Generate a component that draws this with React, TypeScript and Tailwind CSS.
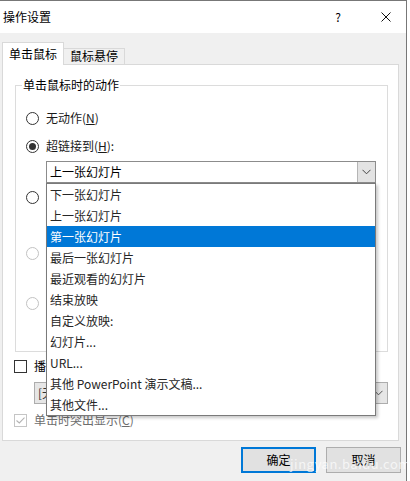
import React from 'react';

const font = { fontFamily: '"Noto Sans CJK SC", "Noto Sans", sans-serif' };

const listItems = [
    '下一张幻灯片',
    '上一张幻灯片',
    '第一张幻灯片',
    '最后一张幻灯片',
    '最近观看的幻灯片',
    '结束放映',
    '自定义放映:',
    '幻灯片...',
    'URL...',
    '其他 PowerPoint 演示文稿...',
    '其他文件...',
];

function Radio({ checked = false, disabled = false }: { checked?: boolean; disabled?: boolean }) {
    return (
        <span
            className={
                'w-[13px] h-[13px] rounded-full border flex items-center justify-center shrink-0 bg-white ' +
                (disabled ? 'border-[#c2c2c2]' : 'border-[#333333]')
            }
        >
            {checked && <span className="w-[7px] h-[7px] rounded-full bg-[#333333]" />}
        </span>
    );
}

function Chevron({ color = '#444' }: { color?: string }) {
    return (
        <svg width="9" height="6" viewBox="0 0 9 6">
            <path d="M0.5 0.8 L4.5 4.8 L8.5 0.8" fill="none" stroke={color} strokeWidth="1" />
        </svg>
    );
}

export default function App() {
    return (
        <div className="w-[410px] h-[481px] bg-white overflow-hidden text-[12px] text-[#1a1a1a]" style={font}>
            <div className="relative w-[407px] h-[481px] bg-[#f0f0f0] border-t border-r border-[#777777] flex flex-col">
                {/* Title bar */}
                <div className="h-[32px] bg-white flex items-center pl-[3px] shrink-0">
                    <span className="leading-[16px] text-black">操作设置</span>
                    <div className="ml-auto flex items-center mr-[15px]">
                        <span className="w-[12px] text-center leading-[16px] text-black">?</span>
                        <svg className="ml-[37px]" width="10" height="10" viewBox="0 0 10 10">
                            <path d="M0.5 0.5 L9.5 9.5 M9.5 0.5 L0.5 9.5" stroke="#111" strokeWidth="1" />
                        </svg>
                    </div>
                </div>

                {/* Body */}
                <div className="pl-[2px] pt-[9px] flex flex-col">
                    {/* Tabs */}
                    <div className="flex items-end h-[22px]">
                        <div className="relative z-10 h-[23px] -mb-px bg-white border border-b-0 border-[#d9d9d9] w-[62px] flex items-center justify-center leading-[16px] text-black">
                            单击鼠标
                        </div>
                        <div className="h-[16px] bg-[#f0f0f0] border border-l-0 border-b-0 border-[#d9d9d9] w-[61px] flex items-end justify-center leading-[16px] text-black">
                            鼠标悬停
                        </div>
                    </div>

                    {/* Panel */}
                    <div className="w-[397px] h-[377px] bg-white border border-[#d9d9d9] flex flex-col">
                        {/* Group box */}
                        <div className="relative ml-[12px] mt-[20px] w-[373px] h-[267px] border border-[#dcdcdc] flex flex-col">
                            <span className="absolute left-[6px] -top-[9px] px-[1px] bg-white leading-[16px] text-black">
                                单击鼠标时的动作
                            </span>

                            <div className="mt-[22px] ml-[10px] h-[20px] flex items-center gap-[7px]">
                                <Radio />
                                <span className="leading-[20px]">无动作(<u>N</u>)</span>
                            </div>
                            <div className="mt-[8px] ml-[10px] h-[20px] flex items-center gap-[7px]">
                                <Radio checked />
                                <span className="leading-[20px]">超链接到(<u>H</u>):</span>
                            </div>

                            {/* Hyperlink combo with open list */}
                            <div className="relative z-20 mt-[5px] ml-[30px] w-[330px] h-[22px] border border-[#8c8c8c] bg-white flex items-center">
                                <span className="pl-[3px] leading-[20px] text-black">上一张幻灯片</span>
                                <span className="ml-auto w-[18px] h-full bg-[#e3e3e3] border-l border-[#b5b5b5] flex items-center justify-center">
                                    <Chevron />
                                </span>
                                <div className="absolute left-[-1px] top-[21px] w-[330px] border border-[#7a7a7a] bg-white shadow-[2px_2px_3px_rgba(0,0,0,0.22)] flex flex-col">
                                    {listItems.map((item, i) => (
                                        <div
                                            key={i}
                                            className={
                                                'h-[21px] pl-[3px] flex items-center leading-[20px] ' +
                                                (i === 2 ? 'bg-[#0078d7] text-white' : 'text-[#262626]')
                                            }
                                        >
                                            {item}
                                        </div>
                                    ))}
                                </div>
                            </div>

                            {/* Radios hidden behind the open list */}
                            <div className="mt-[4px] ml-[10px] h-[20px] flex items-center">
                                <Radio />
                            </div>
                            <div className="mt-[36px] ml-[10px] h-[20px] flex items-center">
                                <Radio disabled />
                            </div>
                            <div className="mt-[30px] ml-[10px] h-[20px] flex items-center">
                                <Radio disabled />
                            </div>
                        </div>

                        {/* Sound */}
                        <div className="mt-[4px] ml-[11px] h-[20px] flex items-center gap-[7px]">
                            <span className="w-[13px] h-[13px] border border-[#333333] bg-white shrink-0" />
                            <span className="leading-[20px] text-black">播放声音(<u>P</u>):</span>
                        </div>
                        <div className="mt-[6px] ml-[31px] w-[354px] h-[22px] border border-[#adadad] bg-[#e6e6e6] flex items-center">
                            <span className="pl-[3px] leading-[20px] text-[#333]">[无声音]</span>
                            <span className="ml-auto mr-[4px] flex items-center">
                                <Chevron color="#555" />
                            </span>
                        </div>
                        <div className="mt-[6px] ml-[11px] h-[20px] flex items-center gap-[7px]">
                            <span className="w-[13px] h-[13px] border border-[#c5c5c5] bg-white shrink-0 flex items-center justify-center">
                                <svg width="9" height="7" viewBox="0 0 9 7">
                                    <path d="M0.5 3.5 L3.3 6 L8.5 0.6" fill="none" stroke="#b3b3b3" strokeWidth="1.1" />
                                </svg>
                            </span>
                            <span className="leading-[20px] text-[#6d6d6d]">单击时突出显示(<u>C</u>)</span>
                        </div>
                    </div>

                    {/* Buttons */}
                    <div className="mt-[6px] pr-[5px] flex justify-end gap-[10px]">
                        <button className="w-[75px] h-[26px] bg-[#e1e1e1] border-2 border-[#0078d7] leading-[20px] text-black">
                            确定
                        </button>
                        <button className="w-[75px] h-[26px] bg-[#e1e1e1] border border-[#adadad] leading-[20px] text-black">
                            取消
                        </button>
                    </div>
                </div>

                {/* Watermark */}
                <span className="absolute left-[290px] top-[455px] text-[13px] leading-[16px] text-white/70 tracking-[0.5px]">
                    jingyan.baidu.com
                </span>
            </div>

            {/* Annotation arrow */}
            <svg className="absolute left-0 top-0 pointer-events-none" width="410" height="481" viewBox="0 0 410 481">
                <polygon
                    points="137,253 142,237 147,241 204,207 151,245 156,249"
                    fill="#e8474c"
                />
            </svg>
        </div>
    );
}
